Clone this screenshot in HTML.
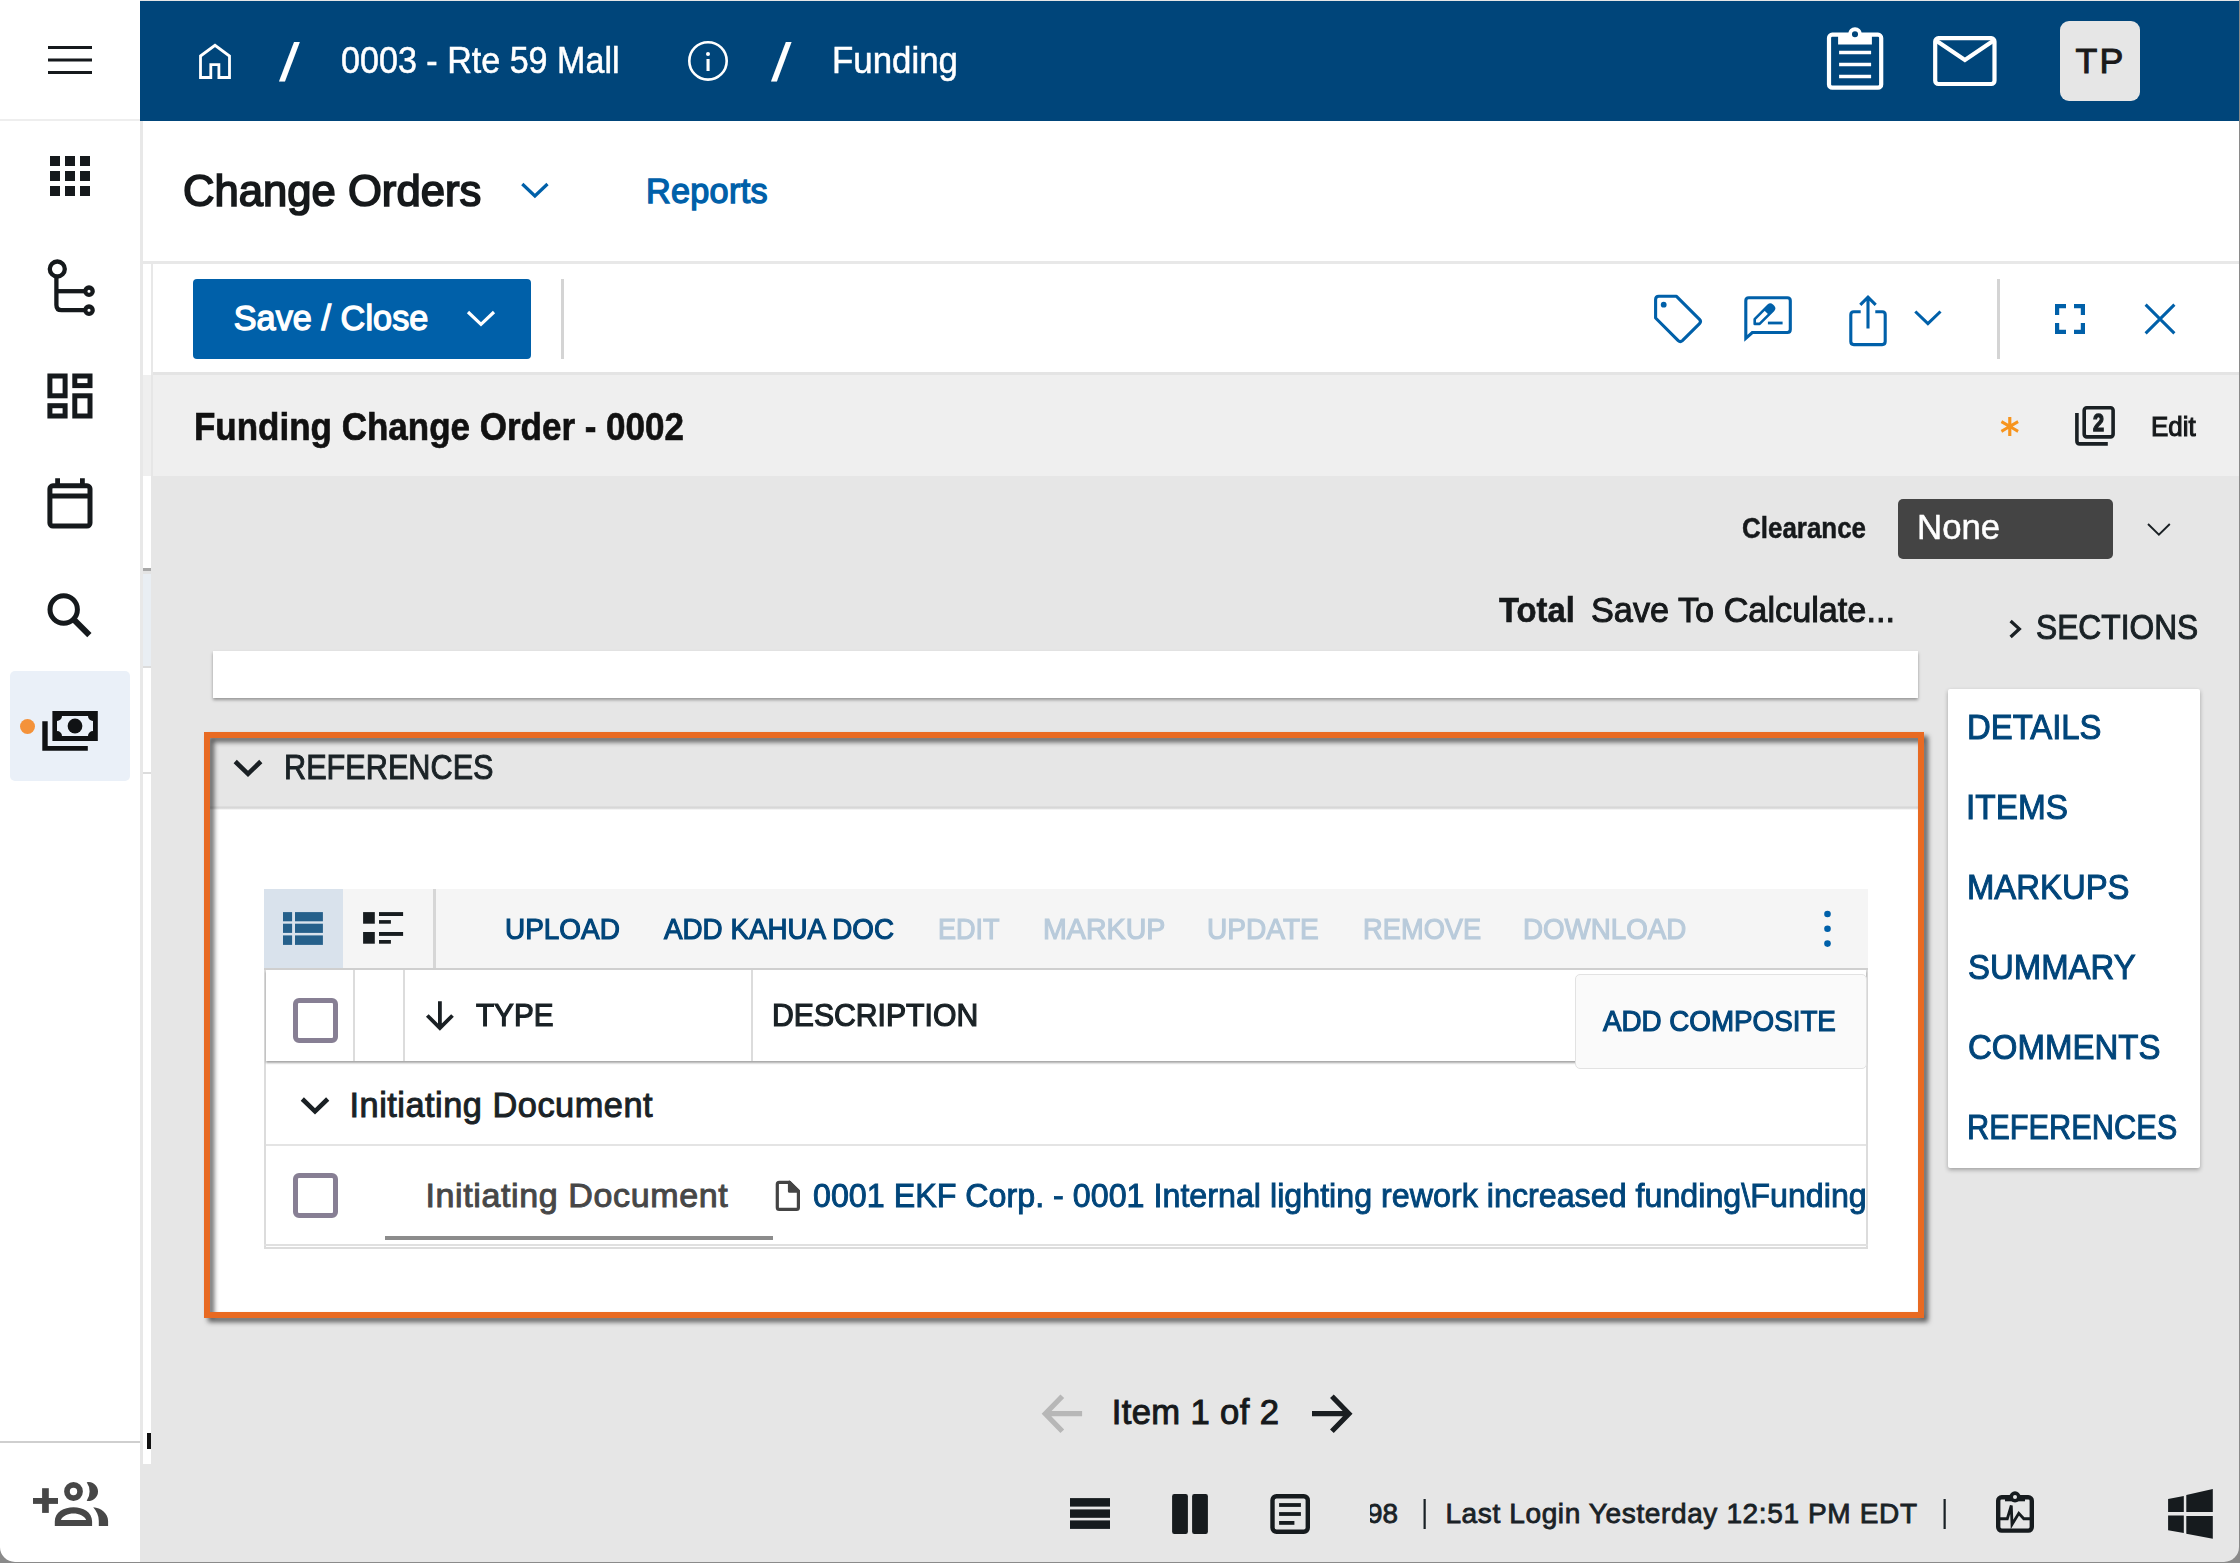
<!DOCTYPE html>
<html lang="en"><head><meta charset="utf-8"><title>Kahua - Funding Change Order</title>
<style>
html,body{margin:0;padding:0;}
body{width:2240px;height:1563px;position:relative;overflow:hidden;background:#e6e6e6;
 font-family:"Liberation Sans",sans-serif;color:#1a2226;}
.a{position:absolute;}
.t{position:absolute;white-space:nowrap;line-height:1;}
svg{position:absolute;overflow:visible;}
</style></head>
<body>
<!-- sidebar -->
<div class="a" style="left:0;top:0;width:140px;height:1563px;background:#fff;"></div>
<div class="a" style="left:0;top:119px;width:140px;height:2px;background:#eeeeee;"></div>
<div class="a" style="left:140px;top:121px;width:3px;height:1320px;background:#e8e8e8;"></div>
<div class="a" style="left:143px;top:121px;width:8px;height:1343px;background:#fff;"></div>
<div class="a" style="left:0;top:1441px;width:140px;height:2px;background:#cfcfcf;"></div>
<div class="a" style="left:10px;top:671px;width:120px;height:110px;background:#eaf0f8;border-radius:5px;"></div>
<div class="a" style="left:20px;top:719px;width:15px;height:15px;background:#f4923a;border-radius:50%;"></div>
<!-- narrow strip details -->
<div class="a" style="left:143px;top:568px;width:8px;height:3px;background:#a8a8a8;"></div>
<div class="a" style="left:143px;top:571px;width:8px;height:3px;background:#e4e4e4;"></div>
<div class="a" style="left:143px;top:574px;width:8px;height:92px;background:#e9eef3;"></div>
<div class="a" style="left:143px;top:666px;width:8px;height:2px;background:#dcdcdc;"></div>
<div class="a" style="left:143px;top:772px;width:8px;height:2px;background:#dcdcdc;"></div>
<div class="a" style="left:147.4px;top:1433px;width:3.6px;height:16px;background:#111;"></div>
<!-- top bar -->
<div class="a" style="left:140px;top:1px;width:2100px;height:120px;background:#00457a;"></div>
<div class="a" style="left:2060px;top:21px;width:80px;height:80px;background:#e6e6e6;border-radius:9px;"></div>
<!-- title row -->
<div class="a" style="left:143px;top:121px;width:2097px;height:141px;background:#fff;"></div>
<div class="a" style="left:143px;top:261px;width:2097px;height:3px;background:#e8e8e8;"></div>
<!-- toolbar row -->
<div class="a" style="left:151px;top:264px;width:2089px;height:109px;background:#fff;"></div>
<div class="a" style="left:151px;top:264px;width:2px;height:212px;background:#e8e8e8;"></div>
<div class="a" style="left:193px;top:279px;width:338px;height:80px;background:#0060a9;border-radius:4px;"></div>
<div class="a" style="left:561px;top:279px;width:3px;height:80px;background:#d4d4d4;"></div>
<div class="a" style="left:1997px;top:279px;width:3px;height:80px;background:#d4d4d4;"></div>
<div class="a" style="left:153px;top:372px;width:2087px;height:3px;background:#e4e4e4;"></div>
<!-- record header row -->
<div class="a" style="left:143px;top:375px;width:2097px;height:101px;background:#efefef;"></div>
<div class="a" style="left:151px;top:375px;width:2px;height:101px;background:#e6e6e6;"></div>
<!-- clearance -->
<div class="a" style="left:1898px;top:499px;width:215px;height:60px;background:#444;border-radius:5px;"></div>
<!-- white card stub -->
<div class="a" style="left:213px;top:651px;width:1705px;height:47px;background:#fff;box-shadow:0 2px 3px rgba(0,0,0,.35);"></div>
<!-- sections nav -->
<div class="a" style="left:1948px;top:689px;width:252px;height:479px;background:#fff;box-shadow:0 2px 4px rgba(0,0,0,.3);border-radius:2px;"></div>
<!-- references panel -->
<div class="a" style="left:210px;top:738px;width:1708px;height:574px;background:#fff;"></div>
<div class="a" style="left:210px;top:738px;width:1708px;height:70px;background:#e6e6e6;"></div>
<div class="a" style="left:210px;top:806px;width:1708px;height:4px;background:linear-gradient(#e0e0e0,#d4d4d4 50%,#fff);"></div>
<div class="a" style="left:204px;top:732px;width:1708px;height:574px;border:6px solid #e86a22;filter:drop-shadow(4.4px 4.4px 2.5px rgba(0,0,0,.6));"></div>
<!-- grid -->
<div class="a" style="left:264px;top:889px;width:1604px;height:80px;background:#f5f5f5;"></div>
<div class="a" style="left:264px;top:889px;width:79px;height:80px;background:#d9e2ec;"></div>
<div class="a" style="left:433px;top:889px;width:3px;height:80px;background:#d6d6d6;"></div>
<div class="a" style="left:264px;top:968px;width:1604px;height:2px;background:#cfcfcf;"></div>
<div class="a" style="left:264px;top:970px;width:2px;height:278px;background:#dcdcdc;"></div>
<div class="a" style="left:1866px;top:970px;width:2px;height:278px;background:#dcdcdc;"></div>
<div class="a" style="left:266px;top:970px;width:1600px;height:91px;background:#fff;box-shadow:0 2px 2px rgba(0,0,0,.35);"></div>
<div class="a" style="left:353px;top:970px;width:2px;height:91px;background:#dcdcdc;"></div>
<div class="a" style="left:403px;top:970px;width:2px;height:91px;background:#dcdcdc;"></div>
<div class="a" style="left:751px;top:970px;width:2px;height:91px;background:#dcdcdc;"></div>
<div class="a" style="left:1575px;top:974px;width:290px;height:93px;background:#fafafa;border:1.5px solid #e2e2e2;border-radius:5px;"></div>
<div class="a" style="left:266px;top:1144px;width:1600px;height:2px;background:#e4e4e4;"></div>
<div class="a" style="left:264px;top:1244px;width:1604px;height:2px;background:#e0e0e0;"></div>
<div class="a" style="left:264px;top:1247px;width:1604px;height:2px;background:#dcdcdc;"></div>
<div class="a" style="left:385px;top:1236px;width:388px;height:4px;background:#8c8c8c;"></div>
<div class="a" style="left:293px;top:998px;width:35px;height:35px;border:5px solid #877f94;border-radius:6px;background:#fff;"></div>
<div class="a" style="left:293px;top:1173px;width:35px;height:35px;border:5px solid #877f94;border-radius:6px;background:#fff;"></div>
<!-- window frame bottom -->
<div class="a" style="left:0;top:-30px;width:2238.8px;height:1591.8px;border-radius:0 0 15px 15px;box-shadow:0 0 0 40px #8a8a8a;z-index:50;"></div>

<svg width="2240" height="1563" viewBox="0 0 2240 1563" style="left:0;top:0" fill="none" stroke-linecap="butt" stroke-linejoin="miter">
<!-- ===== sidebar icons ===== -->
<g fill="#15191c" stroke="none">
 <rect x="48" y="46" width="44" height="3"/><rect x="48" y="58.5" width="44" height="3"/><rect x="48" y="71" width="44" height="3"/>
 <!-- apps grid -->
 <rect x="50" y="156" width="10" height="10"/><rect x="65" y="156" width="10" height="10"/><rect x="80" y="156" width="10" height="10"/>
 <rect x="50" y="171" width="10" height="10"/><rect x="65" y="171" width="10" height="10"/><rect x="80" y="171" width="10" height="10"/>
 <rect x="50" y="186" width="10" height="10"/><rect x="65" y="186" width="10" height="10"/><rect x="80" y="186" width="10" height="10"/>
</g>
<!-- tree -->
<g stroke="#15191c" stroke-width="4.3">
 <circle cx="57.3" cy="269" r="7.5"/>
 <path d="M56.4 276.5 V305 Q56.4 310.2 61.6 310.2 H85.4"/>
 <path d="M56.4 291.2 H85.4"/>
 <circle cx="89" cy="291.2" r="3.7"/><circle cx="89" cy="310.2" r="3.7"/>
</g>
<!-- dashboard -->
<g stroke="#15191c" stroke-width="5">
 <rect x="49.9" y="376" width="15.2" height="19.8"/>
 <rect x="74.8" y="376" width="15.2" height="9.6"/>
 <rect x="49.9" y="405.7" width="15.2" height="10.3"/>
 <rect x="74.8" y="395.8" width="15.2" height="20.2"/>
</g>
<!-- calendar -->
<g stroke="#15191c" stroke-width="5">
 <rect x="49.9" y="485.8" width="40.1" height="40.2" rx="3"/>
 <path d="M49.9 495.9 H90"/>
 <path d="M57.6 478.3 V486 M82.4 478.3 V486" stroke-width="4.8"/>
</g>
<!-- search -->
<g stroke="#15191c">
 <circle cx="63.7" cy="609.5" r="13.7" stroke-width="5"/>
 <path d="M74.6 620.4 L89.4 635.2" stroke-width="6"/>
</g>
<!-- payments -->
<g fill="#101214" stroke="none">
 <path fill-rule="evenodd" d="M52.4 711 H97.8 V741 H52.4 Z M62 716 H88 A5 5 0 0 0 93 721 V731 A5 5 0 0 0 88 736 H62 A5 5 0 0 0 57 731 V721 A5 5 0 0 0 62 716 Z"/>
 <circle cx="75" cy="726" r="7.4"/>
 <path d="M42.3 721.2 H47.7 V746 H87.8 V750.7 H42.3 Z"/>
</g>
<!-- group add -->
<g fill="#474747" stroke="none">
 <rect x="42.1" y="1488.2" width="6.7" height="24.7"/><rect x="33" y="1498" width="25" height="5.9"/>
 <path fill-rule="evenodd" d="M54.8 1525.9 V1521.5 C54.8 1512 64 1507.2 73.5 1507.2 S92.1 1512 92.1 1521.5 V1525.9 Z M60.9 1520 C62.5 1516 68 1513.5 73.5 1513.5 S84.6 1516 86.2 1520 Z"/>
 <path d="M86.7 1482.3 A9.4 9.4 0 1 1 86.7 1500.7 A16 16 0 0 0 86.7 1482.3 Z"/>
 <path d="M93.2 1507.2 C101 1508 108.1 1513 108.1 1521 V1525.9 H98.8 V1521 C98.8 1515.5 96.5 1511 93.2 1507.2 Z"/>
</g>
<circle cx="73.5" cy="1491.5" r="6.55" stroke="#474747" stroke-width="5.7"/>

<!-- ===== top bar icons (white) ===== -->
<g stroke="#fff" stroke-width="2.8">
 <path d="M200.5 56 L215 45.3 L229.5 56 V77.5 H218.9 V64.6 H210.8 V77.5 H200.5 Z"/>
 <circle cx="708" cy="60.9" r="18.7" stroke-width="2.6"/>
</g>
<g fill="#fff" stroke="none">
 <circle cx="708" cy="53.9" r="2"/><rect x="706.5" y="59" width="3.1" height="12"/>
 <!-- clipboard clip -->
 <rect x="1838.1" y="33" width="33.8" height="11.5"/>
</g>
<g stroke="#fff" stroke-width="4.2">
 <rect x="1829" y="34.7" width="52.2" height="52.9" rx="3.2"/>
 <path d="M1839.1 52.5 H1871.1 M1839.1 64.5 H1871.1 M1839.1 76.5 H1871.1" stroke-width="3.6"/>
 <circle cx="1855" cy="34.2" r="5" stroke-width="3.9" fill="#00457a"/>
 <rect x="1935.2" y="38.2" width="59.3" height="45.8" rx="3.2"/>
 <path d="M1936 40.5 L1964.9 60 L1993.7 40.5"/>
</g>

<!-- ===== title/tool row icons (blue) ===== -->
<g stroke="#0060a9" stroke-width="3.1">
 <path d="M522.3 184 L534.9 196 L547.5 184" stroke-width="3.2"/>
 <!-- tag -->
 <path d="M1655.6 299.5 Q1655.6 296.3 1658.8 296.3 H1676.5 L1699.5 319.3 Q1701.5 321.5 1699.5 323.7 L1682.4 340.6 Q1680.3 342.5 1678.2 340.6 L1655.6 318 Z" stroke-linejoin="round"/>
 <!-- comment edit -->
 <path d="M1745.8 338.3 V300.7 Q1745.8 297.7 1748.8 297.7 H1787.3 Q1790.3 297.7 1790.3 300.7 V329.5 Q1790.3 332.5 1787.3 332.5 H1752.3 Z"/>
 <path d="M1754.7 319.2 L1768.4 305.4 Q1770.3 303.7 1772.1 305.4 L1773.3 306.7 Q1774.9 308.6 1773.2 310.3 L1759.6 323.9 H1754.7 Z" stroke-width="2.6" stroke-linejoin="round"/>
 <path d="M1767.9 323 H1782.6" stroke-width="2.8"/>
 <!-- share -->
 <path d="M1860.7 311.8 H1853.8 Q1850.8 311.8 1850.8 314.8 V341.6 Q1850.8 344.6 1853.8 344.6 H1882.2 Q1885.2 344.6 1885.2 341.6 V314.8 Q1885.2 311.8 1882.2 311.8 H1875.3"/>
 <path d="M1868 328.5 V297.2 M1860.3 304.9 L1868 297.2 L1875.7 304.9"/>
 <path d="M1915.3 311.5 L1927.9 323.5 L1940.5 311.5"/>
 <!-- fullscreen -->
 <path d="M2057.1 315 V306.1 H2066 M2074 306.1 H2082.9 V315 M2082.9 323 V331.9 H2074 M2066 331.9 H2057.1 V323" stroke-width="4.2"/>
 <!-- close -->
 <path d="M2145.6 304.6 L2174.4 333.4 M2174.4 304.6 L2145.6 333.4" stroke-width="3"/>
</g>
<g fill="#0060a9" stroke="none">
 <circle cx="1663.7" cy="304.7" r="2.9"/>
 <path d="M1763.8 309.9 L1768.4 305.4 Q1770.3 303.7 1772.1 305.4 L1773.3 306.7 Q1774.9 308.6 1773.2 310.3 L1768.7 314.8 Z"/>
 <circle cx="1827.5" cy="914" r="3.3"/><circle cx="1827.5" cy="928.8" r="3.3"/><circle cx="1827.5" cy="943.6" r="3.3"/>
</g>
<!-- save/close chevron -->
<path d="M468 312 L481 324.3 L494 312" stroke="#fff" stroke-width="3.2"/>

<!-- ===== record header icons ===== -->
<g stroke="#1a2024" stroke-width="3.6">
 <rect x="2084.2" y="407.7" width="28.9" height="29.2" rx="2.6"/>
 <path d="M2076.9 413 V440.9 Q2076.9 443.9 2079.9 443.9 H2107.8"/>
 <path d="M2148 524 L2158.9 534.6 L2169.8 524" stroke-width="1.9"/>
 <path d="M2010.6 621 L2019.3 628.9 L2010.6 637" stroke-width="3.3"/>
 <path d="M235.2 761.5 L248 773.8 L260.8 761.5" stroke-width="4.6"/>
 <path d="M302.3 1099 L315 1111.3 L327.7 1099" stroke-width="4.6"/>
 <path d="M439.9 1001.3 V1027.6 M427.3 1015.5 L439.9 1028.1 L452.5 1015.5" stroke-width="3.8"/>
</g>
<!-- list view icons -->
<g fill="#25608b" stroke="none">
 <rect x="283" y="912.1" width="9.1" height="9.2"/><rect x="295" y="912.1" width="27.9" height="9.2"/>
 <rect x="283" y="923.7" width="9.1" height="9.2"/><rect x="295" y="923.7" width="27.9" height="9.2"/>
 <rect x="283" y="935.4" width="9.1" height="9.5"/><rect x="295" y="935.4" width="27.9" height="9.5"/>
</g>
<g fill="#171c1f" stroke="none">
 <rect x="363.1" y="912.1" width="11.7" height="11.6"/><rect x="379" y="912.1" width="24.1" height="3.9"/><rect x="379" y="920.1" width="11.9" height="3.6"/>
 <rect x="363.1" y="932" width="11.7" height="11.7"/><rect x="379" y="932" width="24.1" height="3.9"/><rect x="379" y="940" width="11.9" height="3.7"/>
</g>
<!-- doc icon in row -->
<g stroke="#444" stroke-width="3.2" stroke-linejoin="round">
 <path d="M779.2 1182.3 H789.5 L798.4 1191.2 V1207.5 Q798.4 1209.4 796.5 1209.4 H779.2 Q777.3 1209.4 777.3 1207.5 V1184.2 Q777.3 1182.3 779.2 1182.3 Z"/>
 <path d="M789.5 1182.3 V1191.2 H798.4 Z" fill="#444"/>
</g>
<!-- pager arrows -->
<path d="M1046 1413.7 H1082.1 M1062.3 1396.2 L1045.3 1413.7 L1062.3 1431.2" stroke="#b7b7b7" stroke-width="5.2"/>
<path d="M1312 1413.7 H1348 M1331.9 1396.2 L1348.9 1413.7 L1331.9 1431.2" stroke="#1a1e21" stroke-width="5.2"/>

<!-- ===== status bar icons ===== -->
<g fill="#161b1e" stroke="none">
 <rect x="1070" y="1498.1" width="40" height="8.5"/><rect x="1070" y="1509.4" width="40" height="8.4"/><rect x="1070" y="1520.4" width="40" height="8.5"/>
 <rect x="1172.1" y="1494" width="15.8" height="40" rx="2.2"/><rect x="1192.1" y="1494" width="15.8" height="40" rx="2.2"/>
 <rect x="1279.1" y="1503.1" width="21.8" height="3.8"/><rect x="1279.1" y="1512.1" width="21.8" height="3.8"/><rect x="1279.1" y="1521" width="15.3" height="3.8"/>
 <!-- windows logo -->
 <path d="M2168.1 1499 L2183.8 1495.9 V1512.1 H2168.1 Z M2186.3 1495 L2212.8 1489 V1511.9 H2186.3 Z M2168.1 1515.6 H2183.8 V1533.1 L2168.1 1530.3 Z M2186.3 1515.9 H2212.8 V1538.8 L2186.3 1533.8 Z"/>
 <rect x="2005" y="1495" width="20" height="6.3"/>
 <circle cx="2015" cy="1496.9" r="5.6"/>
</g>
<g stroke="#161b1e">
 <rect x="1272.5" y="1496.2" width="35.3" height="35.6" rx="4" stroke-width="4.4"/>
 <rect x="1998.2" y="1497.2" width="33.6" height="33.4" rx="3.5" stroke-width="4.4"/>
 <path d="M2000 1518.75 H2007.3 L2011.3 1505.5 L2012 1524.5 L2018.8 1513.3 L2023.8 1518.75 H2030" stroke-width="2.8"/>
</g>
<circle cx="2015" cy="1496.9" r="2" fill="#e6e6e6"/>
</svg>


<!-- text -->
<span class="t" style="left:341.11px;top:42.85px;font-size:36.03px;color:#fff;-webkit-text-stroke:0.51px currentColor;transform-origin:0 0;transform:scaleX(0.9465);">0003 - Rte 59 Mall</span>
<span class="t" style="left:831.82px;top:42.85px;font-size:36.03px;color:#fff;-webkit-text-stroke:0.51px currentColor;transform-origin:0 0;transform:scaleX(0.9672);">Funding</span>
<span class="t" style="left:2075.51px;top:43.64px;font-size:35.73px;color:#1a1a1a;-webkit-text-stroke:1.02px currentColor;letter-spacing:2.162px;">TP</span>
<span class="t" style="left:182.88px;top:169.09px;font-size:44.0px;color:#16191b;-webkit-text-stroke:1.73px currentColor;transform-origin:0 0;transform:scaleX(0.9914);">Change Orders</span>
<span class="t" style="left:645.97px;top:173.75px;font-size:34.24px;color:#0060a9;-webkit-text-stroke:1.34px currentColor;letter-spacing:0.284px;">Reports</span>
<span class="t" style="left:233.67px;top:300.75px;font-size:34.24px;color:#fff;-webkit-text-stroke:1.34px currentColor;letter-spacing:0.055px;">Save / Close</span>
<span class="t" style="left:193.90px;top:407.65px;font-size:38.3px;color:#111;font-weight:bold;-webkit-text-stroke:0.65px currentColor;transform-origin:0 0;transform:scaleX(0.9137);">Funding Change Order - 0002</span>
<span class="t" style="left:2150.60px;top:413.92px;font-size:26.88px;color:#16191b;-webkit-text-stroke:1.06px currentColor;transform-origin:0 0;transform:scaleX(0.9665);">Edit</span>
<span class="t" style="left:1742.40px;top:513.06px;font-size:30.22px;color:#16191b;font-weight:bold;-webkit-text-stroke:0.51px currentColor;transform-origin:0 0;transform:scaleX(0.8586);">Clearance</span>
<span class="t" style="left:1917.29px;top:510.12px;font-size:35.47px;color:#fff;-webkit-text-stroke:0.5px currentColor;transform-origin:0 0;transform:scaleX(0.9809);">None</span>
<span class="t" style="left:1498.50px;top:592.24px;font-size:35.04px;color:#16191b;font-weight:bold;-webkit-text-stroke:0.59px currentColor;transform-origin:0 0;transform:scaleX(0.9353);">Total</span>
<span class="t" style="left:1590.50px;top:592.53px;font-size:34.46px;color:#16191b;-webkit-text-stroke:0.99px currentColor;transform-origin:0 0;transform:scaleX(0.9940);">Save To Calculate...</span>
<span class="t" style="left:2035.59px;top:610.49px;font-size:34.74px;color:#1a2226;-webkit-text-stroke:1.0px currentColor;transform-origin:0 0;transform:scaleX(0.9140);">SECTIONS</span>
<span class="t" style="left:1967.11px;top:710.49px;font-size:34.74px;color:#00457a;-webkit-text-stroke:1.0px currentColor;transform-origin:0 0;transform:scaleX(0.9459);">DETAILS</span>
<span class="t" style="left:1966.12px;top:790.49px;font-size:34.74px;color:#00457a;-webkit-text-stroke:1.0px currentColor;transform-origin:0 0;transform:scaleX(0.9611);">ITEMS</span>
<span class="t" style="left:1967.11px;top:870.49px;font-size:34.74px;color:#00457a;-webkit-text-stroke:1.0px currentColor;transform-origin:0 0;transform:scaleX(0.9460);">MARKUPS</span>
<span class="t" style="left:1968.05px;top:950.49px;font-size:34.74px;color:#00457a;-webkit-text-stroke:1.0px currentColor;transform-origin:0 0;transform:scaleX(0.9474);">SUMMARY</span>
<span class="t" style="left:1968.05px;top:1030.49px;font-size:34.74px;color:#00457a;-webkit-text-stroke:1.0px currentColor;transform-origin:0 0;transform:scaleX(0.9504);">COMMENTS</span>
<span class="t" style="left:1967.23px;top:1110.49px;font-size:34.74px;color:#00457a;-webkit-text-stroke:1.0px currentColor;transform-origin:0 0;transform:scaleX(0.8859);">REFERENCES</span>
<span class="t" style="left:284.12px;top:750.41px;font-size:34.61px;color:#1a2226;-webkit-text-stroke:0.99px currentColor;transform-origin:0 0;transform:scaleX(0.8859);">REFERENCES</span>
<span class="t" style="left:504.68px;top:913.92px;font-size:29.42px;color:#00457a;-webkit-text-stroke:1.16px currentColor;transform-origin:0 0;transform:scaleX(0.9503);">UPLOAD</span>
<span class="t" style="left:664.08px;top:913.92px;font-size:29.42px;color:#00457a;-webkit-text-stroke:1.16px currentColor;transform-origin:0 0;transform:scaleX(0.9448);">ADD KAHUA DOC</span>
<span class="t" style="left:937.74px;top:913.92px;font-size:29.42px;color:#b9cbdb;-webkit-text-stroke:1.16px currentColor;transform-origin:0 0;transform:scaleX(0.9203);">EDIT</span>
<span class="t" style="left:1042.63px;top:913.92px;font-size:29.42px;color:#b9cbdb;-webkit-text-stroke:1.16px currentColor;transform-origin:0 0;transform:scaleX(0.9728);">MARKUP</span>
<span class="t" style="left:1207.17px;top:913.92px;font-size:29.42px;color:#b9cbdb;-webkit-text-stroke:1.16px currentColor;transform-origin:0 0;transform:scaleX(0.9551);">UPDATE</span>
<span class="t" style="left:1362.72px;top:913.92px;font-size:29.42px;color:#b9cbdb;-webkit-text-stroke:1.16px currentColor;transform-origin:0 0;transform:scaleX(0.9280);">REMOVE</span>
<span class="t" style="left:1522.69px;top:913.92px;font-size:29.42px;color:#b9cbdb;-webkit-text-stroke:1.16px currentColor;transform-origin:0 0;transform:scaleX(0.9435);">DOWNLOAD</span>
<span class="t" style="left:476.42px;top:1000.17px;font-size:31.21px;color:#1a2226;-webkit-text-stroke:1.23px currentColor;transform-origin:0 0;transform:scaleX(0.9502);">TYPE</span>
<span class="t" style="left:772.18px;top:1000.17px;font-size:31.21px;color:#1a2226;-webkit-text-stroke:1.23px currentColor;transform-origin:0 0;transform:scaleX(0.9668);">DESCRIPTION</span>
<span class="t" style="left:1603.08px;top:1006.03px;font-size:29.29px;color:#00457a;-webkit-text-stroke:1.15px currentColor;transform-origin:0 0;transform:scaleX(0.9479);">ADD COMPOSITE</span>
<span class="t" style="left:349.49px;top:1088.25px;font-size:34.33px;color:#1a2226;-webkit-text-stroke:0.98px currentColor;letter-spacing:0.511px;">Initiating Document</span>
<span class="t" style="left:425.39px;top:1177.90px;font-size:34.04px;color:#474747;-webkit-text-stroke:0.98px currentColor;letter-spacing:0.615px;">Initiating Document</span>
<span class="t" style="left:1111.69px;top:1395.41px;font-size:34.61px;color:#16191b;-webkit-text-stroke:0.99px currentColor;letter-spacing:0.374px;">Item 1 of 2</span>
<span class="t" style="left:1445.40px;top:1499.76px;font-size:28.05px;color:#1a2226;-webkit-text-stroke:0.8px currentColor;letter-spacing:0.609px;">Last Login Yesterday 12:51 PM EDT</span>
<span class="t" style="left:278.75px;top:35.75px;font-family:'Liberation Sans',sans-serif;font-size:40px;color:#fff;transform-origin:0 0;transform:scale(1.8750,1.3333);">/</span>
<span class="t" style="left:770.90px;top:35.75px;font-family:'Liberation Sans',sans-serif;font-size:40px;color:#fff;transform-origin:0 0;transform:scale(1.8500,1.3333);">/</span>
<span class="t" style="left:1999.80px;top:413.13px;font-family:'DejaVu Sans',sans-serif;font-size:40px;color:#f7941d;font-weight:bold;transform-origin:0 0;transform:scale(0.9333,1.0050);">*</span>
<span class="t" style="left:2093.11px;top:410.99px;font-family:'Liberation Sans',sans-serif;font-size:40px;color:#1a2024;font-weight:bold;-webkit-text-stroke:2.42px currentColor;transform-origin:0 0;transform:scale(0.4950,0.5821);">2</span>
<span class="t" style="left:1420.80px;top:1496.10px;font-family:'Liberation Sans',sans-serif;font-size:40px;color:#1a2226;transform-origin:0 0;transform:scale(0.7000,0.7763);">|</span>
<span class="t" style="left:1940.90px;top:1496.10px;font-family:'Liberation Sans',sans-serif;font-size:40px;color:#1a2226;transform-origin:0 0;transform:scale(0.7000,0.7763);">|</span>
<div class="a" style="left:806px;top:1160px;width:1060px;height:70px;overflow:hidden;"><span class="t" style="left:7.40px;top:19.56px;font-size:32.3px;color:#00457a;-webkit-text-stroke:0.9px currentColor;transform-origin:0 0;transform:scaleX(0.9982);">0001 EKF Corp. - 0001 Internal lighting rework increased funding\Funding Change Order 0001</span></div>
<div class="a" style="left:1370px;top:1490px;width:40px;height:50px;overflow:hidden;"><span class="t" style="-webkit-text-stroke:0.8px currentColor;left:-3.01px;top:9.88px;font-size:27.9px;color:#1a2226;">98</span></div>
</body></html>
